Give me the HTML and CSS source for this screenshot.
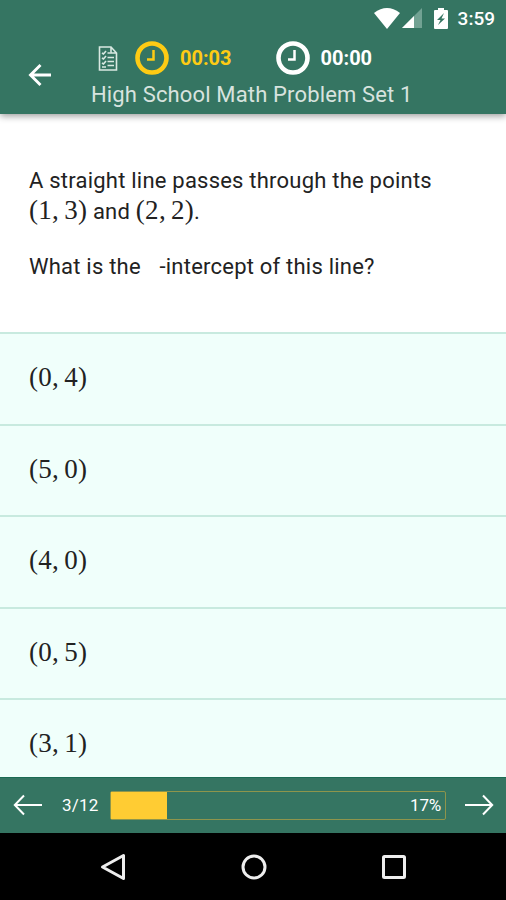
FILE: index.html
```html
<!DOCTYPE html>
<html lang="en">
<head>
  <meta charset="UTF-8">
  <meta name="viewport" content="width=device-width, initial-scale=1">
  <title>High School Math Problem Set 1</title>
  <link rel="stylesheet" href="styles.css">
</head>
<body>

  <header>
    <div class="status-bar">
      <svg class="wifi" width="26" height="21" viewBox="0 0 26 21"><path d="M0 5Q13-5 26 5L13 21Z" fill="#fff"/></svg>
      <svg class="signal" width="20" height="20" viewBox="0 0 20 20">
        <path d="M20 0V20H0Z" fill="#72a293"/>
        <path d="M12 8V20H0Z" fill="#fff"/>
      </svg>
      <svg class="battery" width="14" height="21" viewBox="0 0 14 21">
        <path d="M4 0h6v2h3q1 0 1 1v17q0 1-1 1H1q-1 0-1-1V3q0-1 1-1h3z" fill="#fff"/>
        <path d="M10 5L3 12h3.500L4 17l7-6.500H7.500z" fill="#357562"/>
      </svg>
      <span class="time">3:59</span>
    </div>

    <div class="toolbar">
      <svg class="back" width="24" height="24" viewBox="0 0 24 24"><path d="M23 12H3M12.500 2L2.500 12l10 10" fill="none" stroke="#fff" stroke-width="2.900"/></svg>
      <div class="heading">
        <div class="timers">
          <svg class="sheet" width="20" height="25" viewBox="0 0 20 25">
            <path d="M1.500 1H13l5.500 6v17h-17zM13 1v6h5.500" fill="none" stroke="#d9e9e2" stroke-width="1.600"/>
            <path d="M4 7l1.500 1 2.500-3M4 12l1.500 1L8 10M4 17l1.500 1L8 15M4 21h4M9.500 7h3M9.500 11.500H16M9.500 15.500H16M9.500 19.500H16" fill="none" stroke="#d9e9e2" stroke-width="1.600"/>
          </svg>
          <div class="timer question-timer">
            <svg width="34" height="34" viewBox="0 0 34 34"><path d="M18.500 9v9.500H12" fill="none" stroke="currentColor" stroke-width="2.500"/><circle cx="17" cy="17" r="14.500" fill="none" stroke="currentColor" stroke-width="4.600"/></svg>
            <span>00:03</span>
          </div>
          <div class="timer">
            <svg width="34" height="34" viewBox="0 0 34 34"><path d="M18.500 9v9.500H12" fill="none" stroke="currentColor" stroke-width="2.500"/><circle cx="17" cy="17" r="14.500" fill="none" stroke="currentColor" stroke-width="4.600"/></svg>
            <span>00:00</span>
          </div>
        </div>
        <h1>High School Math Problem Set 1</h1>
      </div>
    </div>
  </header>

  <main>
    <div class="question">
      <p>A straight line passes through the points<br>
      <span class="math">(1,<i></i>3)</span> and <span class="math">(2,<i></i>2)</span>.</p>
      <p>What is the <span class="blank"></span>-intercept of this line?</p>
    </div>

    <div class="options">
      <div class="option"><span class="math">(0,<i></i>4)</span></div>
      <div class="option"><span class="math">(5,<i></i>0)</span></div>
      <div class="option"><span class="math">(4,<i></i>0)</span></div>
      <div class="option"><span class="math">(0,<i></i>5)</span></div>
      <div class="option"><span class="math">(3,<i></i>1)</span></div>
    </div>
  </main>

  <footer>
    <svg width="30" height="22" viewBox="0 0 30 22"><path d="M29 11H2M11 1.500L1.800 11l9.200 9.500" fill="none" stroke="#fff" stroke-width="2"/></svg>
    <span class="count">3/12</span>
    <div class="progress">
      <div class="bar" style="width: 16.700%"></div>
      <span class="percent">17%</span>
    </div>
    <svg width="30" height="22" viewBox="0 0 30 22"><path d="M1 11H28M19 1.500L28.200 11 19 20.500" fill="none" stroke="#fff" stroke-width="2"/></svg>
  </footer>

  <nav>
    <svg width="26" height="28" viewBox="0 0 26 28"><path d="M23.500 2.500v23L2.500 14z" fill="none" stroke="#eee" stroke-width="3" stroke-linejoin="round"/></svg>
    <svg width="26" height="26" viewBox="0 0 26 26"><circle cx="13" cy="13" r="11" fill="none" stroke="#eee" stroke-width="3"/></svg>
    <svg width="26" height="26" viewBox="0 0 26 26"><rect x="2.500" y="2.500" width="21" height="21" rx="1" fill="none" stroke="#eee" stroke-width="3"/></svg>
  </nav>

</body>
</html>
```
FILE: styles.css
```css
* {
  box-sizing: border-box;
}

body {
  margin: 0;
  height: 900px;
  display: flex;
  flex-direction: column;
  overflow: hidden;
  font-family: Roboto, sans-serif;
  background: #fff;
  color: #222;
}

svg {
  display: block;
  flex: none;
}

header {
  position: relative;
  flex: none;
  height: 114px;
  background: #357562;
  color: #fff;
  box-shadow: 0 2px 7px rgba(0, 0, 0, 0.4);
}

.status-bar {
  display: flex;
  justify-content: flex-end;
  align-items: center;
  height: 36px;
  padding-right: 11px;
}

.signal {
  margin-left: 2px;
}

.battery {
  margin: 0 10px 0 12px;
}

.time {
  font-size: 19px;
  font-weight: 500;
}

.toolbar {
  display: flex;
  align-items: center;
  height: 78px;
  padding-left: 28px;
}

.heading {
  margin-left: 39px;
}

.timers {
  display: flex;
  align-items: center;
  height: 44px;
  padding-left: 7px;
}

.timer {
  display: flex;
  align-items: center;
  gap: 11px;
  font-size: 20px;
  font-weight: 700;
}

.question-timer {
  margin: 0 44px 0 17px;
  color: #fecb14;
}

h1 {
  margin: 0;
  height: 34px;
  line-height: 29px;
  font-size: 22px;
  font-weight: 400;
  letter-spacing: 0.15px;
  color: #d8e3df;
}

main {
  flex: 1;
  min-height: 0;
  overflow: hidden;
}

.question {
  height: 218px;
  padding: 51px 29px 0;
  font-size: 22px;
  line-height: 31px;
  letter-spacing: 0.22px;
}

.question p {
  margin: 0 0 24px;
}

.blank {
  display: inline-block;
  width: 13px;
}

.math {
  font-family: "Liberation Serif", serif;
  font-size: 27px;
  line-height: 1;
  letter-spacing: 0.3px;
}

.math i {
  display: inline-block;
  width: 5px;
}

.option {
  display: flex;
  align-items: center;
  height: 91.500px;
  padding: 0 0 2px 29px;
  background: #f0fffb;
  border-top: 2px solid #c8eadf;
}

footer {
  display: flex;
  align-items: center;
  flex: none;
  height: 56px;
  padding: 0 12px 1px 13px;
  background: #357562;
  border-top: 1px solid #1b6b53;
  color: #fff;
}

.count {
  width: 48px;
  margin-left: 19px;
  font-size: 17px;
  letter-spacing: 0.2px;
}

.progress {
  display: flex;
  align-items: center;
  justify-content: space-between;
  width: 336px;
  height: 29px;
  margin-right: 18px;
  border: 1px solid #8e954c;
  border-radius: 2px;
}

.bar {
  height: 27px;
  background: #ffcc33;
}

.percent {
  margin-right: 4px;
  font-size: 17px;
  letter-spacing: -0.2px;
}

nav {
  display: flex;
  justify-content: space-between;
  align-items: center;
  flex: none;
  height: 67px;
  padding: 0 99px 0 100px;
  background: #000;
}
```
